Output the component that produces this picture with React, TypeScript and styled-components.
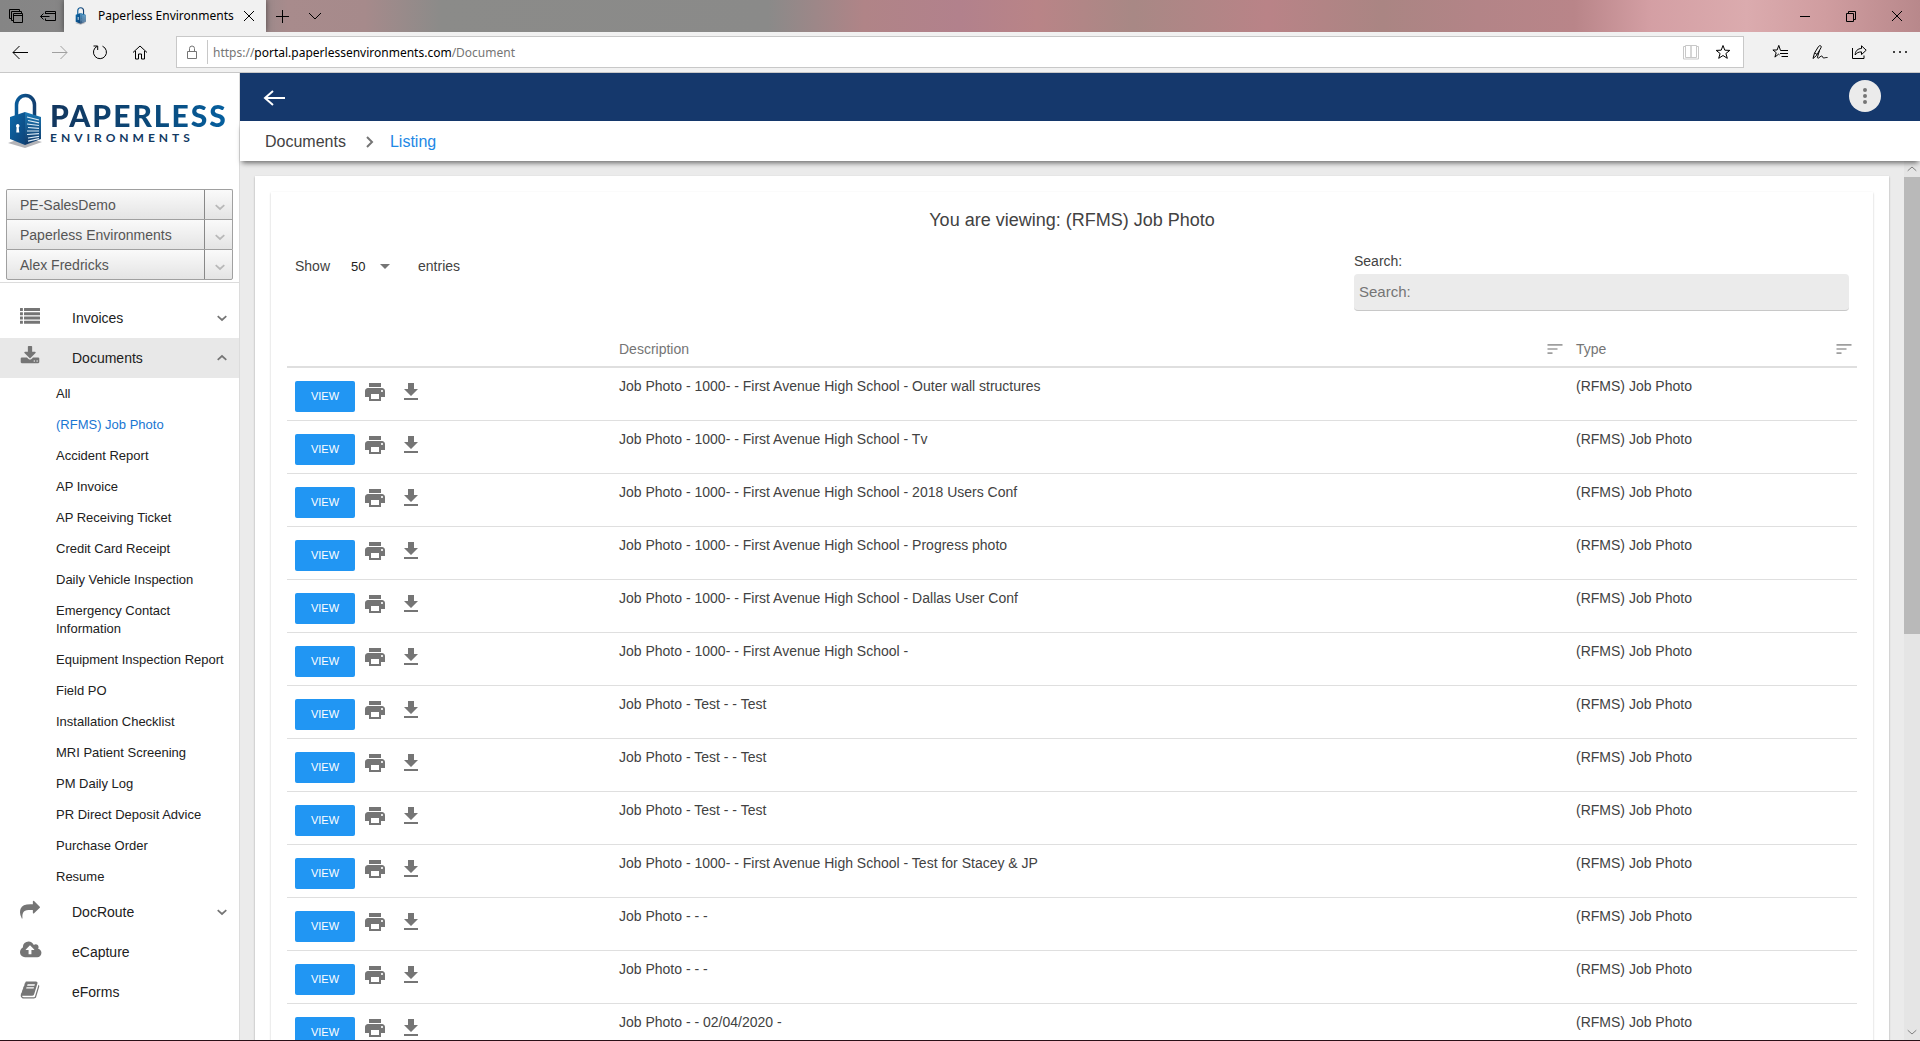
import React from 'react';
import styled, { createGlobalStyle, css } from 'styled-components';

const GlobalStyle = createGlobalStyle`
  *, *::before, *::after { box-sizing: border-box; }
  html, body { margin: 0; height: 100%; overflow: hidden; }
  #root { height: 100%; }
  body {
    font-family: "Liberation Sans", Arial, sans-serif;
    font-size: 14px;
    line-height: 20px;
    color: #424242;
    background: #fff;
  }
  button, input, select { font-family: inherit; }
  button { border: 0; padding: 0; background: none; color: inherit; cursor: pointer; }
  a { color: inherit; text-decoration: none; }
  svg { display: block; flex: none; }
`;

/* ---------- Browser window ---------- */

const Window = styled.div`
  height: 100vh;
  display: flex;
  flex-direction: column;
  overflow: hidden;
  border-bottom: 1px solid #2a1018;
`;

const TitleBar = styled.header`
  flex: none;
  height: 32px;
  display: flex;
  font-family: "Noto Sans", "Open Sans", sans-serif;
  font-size: 12px;
  color: #000;
  background: linear-gradient(
    90deg,
    #858585 0%, #8b8889 12%, #a88b8c 15%, #a68a8b 19%, #8b8b89 23%, #8a8a89 40%,
    #b08487 45%, #b2818c 50%, #b98487 54%, #a88885 59%, #b98387 66%, #aa8583 72%,
    #b38487 77%, #b98589 82%, #d49fa4 86%, #dbabae 91%, #d09da0 95%, #b8888b 100%
  );
`;

const TabTools = styled.div`
  width: 64px;
  display: flex;
  align-items: center;
  gap: 16px;
  padding-left: 8px;
`;

const Tab = styled.div`
  width: 202px;
  display: flex;
  align-items: center;
  padding: 0 11px 0 10px;
  background: #f1f1f1;
  box-shadow: 0 0 6px rgba(0, 0, 0, 0.5);
`;

const TabTitle = styled.span`
  flex: 1;
  margin-left: 11px;
  white-space: nowrap;
  line-height: 20px;
`;

const NewTab = styled.div`
  flex: 1;
  display: flex;
  align-items: center;
  gap: 18px;
  padding-left: 9px;
`;

const WindowButtons = styled.div`
  display: flex;
  align-items: center;
  gap: 32px;
  padding-right: 16px;
`;

const Toolbar = styled.div`
  flex: none;
  height: 41px;
  display: flex;
  align-items: center;
  background: #f1f1f1;
  border-bottom: 1px solid #c8c8c8;
`;

const NavButtons = styled.nav`
  width: 176px;
  display: flex;
  gap: 24px;
  padding-left: 12px;
`;

const AddressBar = styled.div`
  flex: 1;
  height: 32px;
  display: flex;
  align-items: center;
  padding-right: 12px;
  background: #fff;
  border: 1px solid #c8c8c8;
  font-family: "Noto Sans", "Open Sans", sans-serif;
  font-size: 12px;
`;

const LockBox = styled.span`
  width: 31px;
  height: 24px;
  display: flex;
  align-items: center;
  justify-content: center;
  border-right: 1px solid #c8c8c8;
`;

const Url = styled.span`
  flex: 1;
  padding: 1px 0 0 5px;
  color: #757575;
  white-space: nowrap;
  b { font-weight: 400; color: #000; }
`;

const AddressTools = styled.div`
  display: flex;
  gap: 16px;
`;

const BrowserTools = styled.div`
  width: 176px;
  display: flex;
  justify-content: flex-end;
  gap: 24px;
  padding-right: 12px;
`;

const IconButton = styled.button`
  display: flex;
`;

/* ---------- Page ---------- */

const Page = styled.div`
  flex: 1;
  min-height: 0;
  display: flex;
`;

const Sidebar = styled.aside`
  flex: none;
  width: 240px;
  background: #fff;
  border-right: 1px solid #dcdcdc;
`;

const Brand = styled.a`
  height: 116px;
  display: flex;
  align-items: flex-start;
  gap: 7px;
  padding: 20px 0 0 7px;
`;

const BrandText = styled.span`
  padding-top: 7px;
  font-family: Lato, sans-serif;
  color: #123a63;
`;

const BrandName = styled.span`
  display: block;
  font-size: 30px;
  line-height: 30px;
  font-weight: 900;
  letter-spacing: 2px;
  background: linear-gradient(90deg, #12365e, #0a4a7c 60%, #0560a0);
  background-clip: text;
  -webkit-text-fill-color: transparent;
`;

const BrandSub = styled.span`
  display: block;
  padding-top: 2px;
  font-size: 12px;
  line-height: 12px;
  font-weight: 700;
  letter-spacing: 4px;
`;

const Pickers = styled.div`
  height: 94px;
  padding: 0 6px;
  border-bottom: 1px solid #dcdcdc;
`;

const Picker = styled.button`
  width: 100%;
  height: 30px;
  display: flex;
  text-align: left;
  font-size: 14px;
  line-height: 20px;
  color: #555;
  background: linear-gradient(#fafafa, #e4e4e4);
  border: 1px solid #a0a0a0;
  border-bottom-width: 0;
  &:first-child { border-radius: 2px 2px 0 0; }
  &:last-child { height: 31px; border-bottom-width: 1px; border-radius: 0 0 2px 2px; }
`;

const PickerLabel = styled.span`
  flex: 1;
  padding: 5px 13px;
`;

const PickerArrow = styled.span`
  width: 28px;
  align-self: stretch;
  display: flex;
  align-items: center;
  justify-content: center;
  padding: 4px 0 0 2px;
  border-left: 1px solid #888;
`;

const Menu = styled.nav`
  padding-top: 15px;
`;

const MenuItem = styled.a<{ $open?: boolean }>`
  height: 40px;
  display: flex;
  align-items: center;
  padding: 0 12px 0 20px;
  color: #212121;
  background: ${p => (p.$open ? '#e8e8e8' : 'transparent')};
`;

const MenuIcon = styled.span`
  width: 52px;
  height: 24px;
  color: #757575;
`;

const MenuLabel = styled.span`
  flex: 1;
`;

const SubMenu = styled.ul`
  margin: 0;
  padding: 0;
  list-style: none;
`;

const SubItem = styled.a<{ $active?: boolean }>`
  display: block;
  padding: 7px 12px 6px 56px;
  font-size: 13px;
  line-height: 18px;
  color: ${p => (p.$active ? '#1976d2' : '#212121')};
`;

const Main = styled.main`
  flex: 1;
  min-width: 0;
  display: flex;
  flex-direction: column;
`;

const AppBar = styled.div`
  flex: none;
  height: 48px;
  display: flex;
  align-items: center;
  justify-content: space-between;
  padding: 0 39px 0 22px;
  background: #15386c;
`;

const BackButton = styled(IconButton)`
  padding-top: 2px;
`;

const MoreButton = styled.button`
  width: 32px;
  height: 32px;
  display: flex;
  align-items: center;
  justify-content: center;
  margin-bottom: 2px;
  border-radius: 50%;
  background: #ebebeb;
  color: #757575;
`;

const Breadcrumb = styled.nav`
  flex: none;
  height: 40px;
  display: flex;
  align-items: center;
  padding: 2px 0 0 25px;
  font-size: 16px;
  background: #fff;
  box-shadow: 0 4px 5px -2px rgba(0, 0, 0, 0.55);
  z-index: 1;
  svg { margin: 0 15px 0 19px; }
`;

const CurrentCrumb = styled.a`
  color: #1e88e5;
`;

const Body = styled.div`
  flex: 1;
  min-height: 0;
  display: flex;
  background: #ebebeb;
`;

const Scroll = styled.div`
  flex: 1;
  min-width: 0;
  overflow: hidden;
  padding: 15px 15px 0 15px;
`;

const Card = styled.section`
  padding: 16px;
  background: #fff;
  box-shadow: 0 1px 2px rgba(0, 0, 0, 0.3);
`;

const Panel = styled.div`
  padding: 16px;
  background: #fff;
  box-shadow: 0 1px 2px rgba(0, 0, 0, 0.22);
`;

const Title = styled.h1`
  margin: 0;
  font-size: 18px;
  line-height: 24px;
  font-weight: 400;
  text-align: center;
`;

const Controls = styled.div`
  display: flex;
  justify-content: space-between;
  height: 99px;
  padding: 19px 8px 0;
`;

const Length = styled.label`
  display: flex;
  align-items: center;
  height: 30px;
`;

const SelectBox = styled.span`
  display: flex;
  align-items: center;
  margin: 0 28px 0 21px;
`;

const LengthSelect = styled.select`
  appearance: none;
  width: 29px;
  padding: 2px 0 0;
  border: 0;
  outline: 0;
  background: transparent;
  font-size: 13px;
  line-height: 20px;
  color: #212121;
`;

const Search = styled.label`
  width: 495px;
`;

const SearchText = styled.span`
  display: block;
  height: 23px;
`;

const SearchInput = styled.input`
  display: block;
  width: 100%;
  height: 37px;
  padding: 0 5px 2px;
  border: 0;
  border-bottom: 1px solid #c8c8c8;
  border-radius: 4px;
  outline: 0;
  font-size: 15px;
  background: #ebebeb;
  &::placeholder { color: #757575; opacity: 1; }
`;

const Table = styled.table`
  width: 100%;
  table-layout: fixed;
  border-collapse: separate;
  border-spacing: 0;
`;

const Th = styled.th<{ $width?: number }>`
  ${p => p.$width && css`width: ${p.$width}px;`}
  height: 37px;
  padding: 0 3px 0 8px;
  border-bottom: 2px solid #dfdfdf;
  font-weight: 400;
  text-align: left;
  color: #757575;
`;

const HeadCell = styled.div`
  display: flex;
  justify-content: space-between;
  align-items: center;
  height: 35px;
  svg { color: #9e9e9e; }
`;

const Td = styled.td`
  height: 53px;
  padding: 8px;
  vertical-align: top;
  border-bottom: 1px solid #dfdfdf;
`;

const ActionTd = styled(Td)`
  padding-top: 12px;
`;

const Actions = styled.div`
  display: flex;
  align-items: flex-start;
  gap: 12px;
  color: #757575;
`;

const ActionPair = styled.div`
  display: flex;
  align-items: flex-start;
  gap: 8px;
`;

const ViewButton = styled.button`
  width: 60px;
  height: 31px;
  margin-top: 1px;
  border-radius: 2px;
  background: #2196f3;
  color: #fff;
  font-size: 11px;
  line-height: 31px;
  font-weight: 500;
`;

const ScrollTrack = styled.div`
  flex: none;
  width: 16px;
  display: flex;
  flex-direction: column;
  background: #e5e5e5;
`;

const ScrollArrow = styled.button`
  flex: none;
  height: 16px;
  display: flex;
  align-items: center;
  justify-content: center;
`;

const ScrollRail = styled.div`
  flex: 1;
`;

const ScrollThumb = styled.div`
  height: 54%;
  background: #b9b9b9;
`;

/* ---------- Icons ---------- */

type IconProps = { size?: number; box?: string; children: React.ReactNode };

const Fill = ({ size = 24, box = '0 0 24 24', children }: IconProps) => (
  <svg width={size} height={size} viewBox={box} fill="currentColor" aria-hidden="true">{children}</svg>
);

const Line = ({ size = 16, color = '#000', width = 1, children }: { size?: number; color?: string; width?: number; children: React.ReactNode }) => (
  <svg width={size} height={size} viewBox={`0 0 ${size} ${size}`} fill="none" stroke={color} strokeWidth={width} aria-hidden="true">{children}</svg>
);

const Chevron = ({ up, color = '#757575', stroke = 1.7 }: { up?: boolean; color?: string; stroke?: number }) => (
  <svg width={10} height={8} viewBox="0 0 10 8" fill="none" stroke={color} strokeWidth={stroke} aria-hidden="true">
    <path d={up ? 'M0.700 5.800L5 2l4.300 3.800' : 'M0.700 2.200L5 6l4.300-3.800'} />
  </svg>
);

const Padlock = ({ width, height }: { width: number; height: number }) => (
  <svg width={width} height={height} viewBox="0 0 36 56" aria-hidden="true">
    <defs>
      <linearGradient id="shackle" x1="0" x2="1">
        <stop offset="0" stopColor="#0a5a98" />
        <stop offset="1" stopColor="#123f70" />
      </linearGradient>
      <linearGradient id="front" x1="0" y1="0" x2="1" y2="1">
        <stop offset="0" stopColor="#0c6aab" />
        <stop offset="1" stopColor="#0e4378" />
      </linearGradient>
      <linearGradient id="side" x1="0" y1="0" x2="0" y2="1">
        <stop offset="0" stopColor="#1a78b4" />
        <stop offset="1" stopColor="#123a68" />
      </linearGradient>
    </defs>
    <path d="M1 50l17-6 17 5-17 6z" fill="#b4b4b8" />
    <path d="M9.500 25V12a9 9.500 0 0 1 18 0v13" fill="none" stroke="url(#shackle)" strokeWidth="3.500" />
    <path d="M3 24l15-5v33L3 46z" fill="url(#front)" />
    <path d="M18 19l16 5v22l-16 6z" fill="url(#side)" />
    <path d="M20 24l12 3M21 27.500l11 2.300M20 31l12 1.500M21 34.500l11 .8M20 38h12M20 41.500l12-.8M21 45l11-1.700M21 48.200l11-2.500" stroke="#dcebf5" strokeWidth="1.200" />
    <path d="M10.500 31a2 2 0 0 1 1.200 3.600l.6 5h-3l.3-5.200A2 2 0 0 1 10.500 31z" fill="#fff" />
  </svg>
);

const PrintIcon = () => (
  <Fill><path d="M19 8H5c-1.66 0-3 1.34-3 3v6h4v4h12v-4h4v-6c0-1.66-1.34-3-3-3zm-3 11H8v-5h8v5zm3-7c-.55 0-1-.45-1-1s.45-1 1-1 1 .45 1 1-.45 1-1 1zm-1-9H6v4h12V3z" /></Fill>
);
const DownloadIcon = () => (
  <Fill><path d="M19 9h-4V3H9v6H5l7 7 7-7zM5 18v2h14v-2H5z" /></Fill>
);
const SortIcon = () => (
  <Fill size={20}><path d="M3 18h6v-2H3v2zM3 6v2h18V6H3zm0 7h12v-2H3v2z" /></Fill>
);

const FA = '0 0 1792 1792';
const ListIcon = () => (
  <Fill size={20} box={FA}>
    {[180, 560, 940, 1320].map(y => (
      <React.Fragment key={y}>
        <rect x="0" y={y} width="260" height="270" rx="32" />
        <rect x="360" y={y} width="1432" height="270" rx="32" />
      </React.Fragment>
    ))}
  </Fill>
);
const TrayIcon = () => (
  <Fill size={20} box={FA}><path d="M1344 1344q0-26-19-45t-45-19-45 19-19 45 19 45 45 19 45-19 19-45zm256 0q0-26-19-45t-45-19-45 19-19 45 19 45 45 19 45-19 19-45zm128-224v320q0 40-28 68t-68 28h-1472q-40 0-68-28t-28-68v-320q0-40 28-68t68-28h465l135 136q58 56 136 56t136-56l136-136h464q40 0 68 28t28 68zm-325-569q17 41-14 70l-448 448q-18 19-45 19t-45-19l-448-448q-31-29-14-70 17-39 59-39h256v-448q0-26 19-45t45-19h256q26 0 45 19t19 45v448h256q42 0 59 39z" /></Fill>
);
const ShareArrowIcon = () => (
  <Fill size={20} box={FA}><path d="M1792 640q0 26-19 45l-512 512q-19 19-45 19t-45-19-19-45v-256h-224q-98 0-175.5 6t-154 21.5-133 42.5-105.5 69.5-80 101-48.5 138.5-17.5 181q0 55 5 123 0 6 2.5 23.5t2.5 26.5q0 15-8.5 25t-23.5 10q-16 0-28-17-7-9-13-22t-13.5-30-10.5-24q-127-285-127-451 0-199 53-333 162-403 875-403h224v-256q0-26 19-45t45-19 45 19l512 512q19 19 19 45z" /></Fill>
);
const CloudIcon = () => (
  <svg width="22" height="20" viewBox="0 0 1971 1792" fill="currentColor" aria-hidden="true"><path d="M1280 864q0-14-9-23l-352-352q-9-9-23-9t-23 9l-351 351q-10 12-10 24 0 14 9 23t23 9h224v352q0 13 9.5 22.5t22.5 9.5h192q13 0 22.5-9.5t9.5-22.5v-352h224q13 0 22.5-9.5t9.5-22.5zm640 288q0 159-112.5 271.5t-271.5 112.5h-1088q-185 0-316.5-131.5t-131.5-316.5q0-130 70-240t188-165q-2-30-2-43 0-212 150-362t362-150q156 0 285.5 87t188.5 231q71-62 166-62 106 0 181 75t75 181q0 76-41 138 130 31 213.5 135.5t83.5 238.5z" /></svg>
);
const BookIcon = () => (
  <Fill size={20} box={FA}><path d="M1703 478q40 57 18 129l-275 906q-19 64-76.5 107.5t-122.5 43.5h-923q-77 0-148.5-53.5t-99.5-131.5q-24-67-2-127 0-4 3-27t4-37q1-8-3-21.5t-3-19.5q2-11 8-21t16.5-23.5 16.5-23.5q23-38 45-91.5t30-91.5q3-10 .5-30t-.5-28q3-11 17-28t17-23q21-36 42-92t25-90q1-9-2.5-32t.5-28q4-13 22-30.5t22-22.5q19-26 42.5-84.5t27.5-96.5q1-8-3-25.5t-2-26.5q2-8 9-18t18-23 17-21q8-12 16.5-30.5t15-35 16-36 19.5-32 26.5-23.5 36-11.5 47.5 5.5l-1 3q38-9 51-9h761q74 0 114 56t18 130l-274 906q-36 119-71.5 153.5t-128.5 34.5h-869q-27 0-38 15-11 16-1 43 24 70 144 70h923q29 0 56-15.500t35-41.500l300-987q7-22 5-57 38 15 59 43zm-1064 2q-4 13 2 22.500t20 9.500h608q13 0 25.500-9.500t16.500-22.500l21-64q4-13-2-22.500t-20-9.500h-608q-13 0-25.500 9.500t-16.500 22.500zm-83 256q-4 13 2 22.500t20 9.500h608q13 0 25.500-9.500t16.500-22.500l21-64q4-13-2-22.500t-20-9.500h-608q-13 0-25.500 9.500t-16.500 22.500z" /></Fill>
);

const STAR = 'M8 1.500l1.800 4.700 5 .2-3.900 3.100 1.400 4.800L8 11.500l-4.300 2.800 1.400-4.800L1.200 6.400l5-.2z';

/* ---------- Data ---------- */

const documentTypes = [
  'All', '(RFMS) Job Photo', 'Accident Report', 'AP Invoice', 'AP Receiving Ticket',
  'Credit Card Receipt', 'Daily Vehicle Inspection', 'Emergency Contact Information',
  'Equipment Inspection Report', 'Field PO', 'Installation Checklist', 'MRI Patient Screening',
  'PM Daily Log', 'PR Direct Deposit Advice', 'Purchase Order', 'Resume',
];

const rows = [
  'Job Photo - 1000- - First Avenue High School - Outer wall structures',
  'Job Photo - 1000- - First Avenue High School - Tv',
  'Job Photo - 1000- - First Avenue High School - 2018 Users Conf',
  'Job Photo - 1000- - First Avenue High School - Progress photo',
  'Job Photo - 1000- - First Avenue High School - Dallas User Conf',
  'Job Photo - 1000- - First Avenue High School -',
  'Job Photo - Test - - Test',
  'Job Photo - Test - - Test',
  'Job Photo - Test - - Test',
  'Job Photo - 1000- - First Avenue High School - Test for Stacey & JP',
  'Job Photo - - -',
  'Job Photo - - -',
  'Job Photo - - 02/04/2020 -',
];

const accounts = ['PE-SalesDemo', 'Paperless Environments', 'Alex Fredricks'];

/* ---------- Components ---------- */

function BrowserChrome() {
  return (
    <>
      <TitleBar>
        <TabTools>
          <IconButton aria-label="Tabs set aside">
            <Line><path d="M3.500 10.500h-2v-9h10v2M5.500 12.500h-2v-9h10v2M5.500 5.500h9v9h-9zM5.500 7.500h9" /></Line>
          </IconButton>
          <IconButton aria-label="Set tabs aside">
            <Line><path d="M5.500 6V3.500h10v9h-10V10.500M5.500 5.500h10M0.500 8.500h9M3.500 5.500l-3 3 3 3" /></Line>
          </IconButton>
        </TabTools>
        <Tab>
          <Padlock width={13} height={18} />
          <TabTitle>Paperless Environments</TabTitle>
          <IconButton aria-label="Close tab">
            <Line size={12}><path d="M1 1l10 10M11 1L1 11" /></Line>
          </IconButton>
        </Tab>
        <NewTab>
          <IconButton aria-label="New tab"><Line size={15}><path d="M7.500 1v13M1 7.500h13" /></Line></IconButton>
          <IconButton aria-label="Tab previews"><Line size={14}><path d="M1 4l6 6 6-6" /></Line></IconButton>
        </NewTab>
        <WindowButtons>
          <IconButton aria-label="Minimize"><Line size={14}><path d="M2 7.500h10" /></Line></IconButton>
          <IconButton aria-label="Restore"><Line size={14}><path d="M2.500 4.500h7v8h-7zM4.500 4.500v-2h7v8h-2" /></Line></IconButton>
          <IconButton aria-label="Close"><Line size={14}><path d="M2 2l10 10M12 2L2 12" /></Line></IconButton>
        </WindowButtons>
      </TitleBar>
      <Toolbar>
        <NavButtons>
          <IconButton aria-label="Back"><Line><path d="M1 8.500h15M7.500 2L1 8.500 7.500 15" /></Line></IconButton>
          <IconButton aria-label="Forward"><Line color="#a0a0a0"><path d="M0 8.500h15M8.500 2L15 8.500 8.500 15" /></Line></IconButton>
          <IconButton aria-label="Refresh"><Line><path d="M10.500 2.200a6.500 6.500 0 1 1-5.500.2M1.500 2h4.200v4" /></Line></IconButton>
          <IconButton aria-label="Home"><Line><path d="M1 8.500L8 2l7 6.500M3.500 7v8h3v-5h3v5h3V7" /></Line></IconButton>
        </NavButtons>
        <AddressBar>
          <LockBox><Line color="#757575"><path d="M3.500 7.500h9v7h-9zM5.500 7.500v-3a2.500 2.500 0 0 1 5 0v3" /></Line></LockBox>
          <Url>https://<b>portal.paperlessenvironments.com</b>/Document</Url>
          <AddressTools>
            <IconButton aria-label="Reading view"><Line color="#c8c8c8"><path d="M2.500 1.500h5.500v12h-5.500zM8 1.500h5.500v12h-5.500zM2.500 2.500h-2v12.500h15v-12.500h-2" /></Line></IconButton>
            <IconButton aria-label="Add to favorites"><Line><path d={STAR} /></Line></IconButton>
          </AddressTools>
        </AddressBar>
        <BrowserTools>
          <IconButton aria-label="Favorites"><Line><path d="M7.500 10.800L6.500 10.200l-3.600 2.900 1.300-4.400L0.900 6h4.200l1.700-4.600L8.500 6.500H16M8 9.500h8M9.500 12.500H16" /></Line></IconButton>
          <IconButton aria-label="Notes"><Line><path d="M1 14.500L2.500 9l4-6.500c1.200-1.500 3.500-.8 2.500 1.200L4.500 11.500l-3.500 3zM3 9l2 1.500M7.500 6.500L5.500 13c-.3 1.200.5 1.500 1.500.7 1.500-1.200 2.500-2.200 3.300-1.400.7.700.5 2 1.700 1.700.8-.2 1.500-.5 3.500-.5" /></Line></IconButton>
          <IconButton aria-label="Share"><Line><path d="M0.500 4v10.500h11.500V11.500M3.200 11c0-4 2.600-6.500 6.300-6.500V1.800l4.700 4.400-4.700 4.400V7.900c-3 0-4.800.8-6.300 3.100z" /></Line></IconButton>
          <IconButton aria-label="More"><Fill size={16} box="0 0 16 16"><path d="M1 7h2v2H1zM7 7h2v2H7zM13 7h2v2h-2z" /></Fill></IconButton>
        </BrowserTools>
      </Toolbar>
    </>
  );
}

function SideNav() {
  return (
    <Sidebar>
      <Brand href="#">
        <Padlock width={36} height={56} />
        <BrandText>
          <BrandName>PAPERLESS</BrandName>
          <BrandSub>ENVIRONMENTS</BrandSub>
        </BrandText>
      </Brand>
      <Pickers>
        {accounts.map(a => (
          <Picker key={a}>
            <PickerLabel>{a}</PickerLabel>
            <PickerArrow><Chevron color="#b8b8b8" /></PickerArrow>
          </Picker>
        ))}
      </Pickers>
      <Menu>
        <MenuItem href="#">
          <MenuIcon><ListIcon /></MenuIcon>
          <MenuLabel>Invoices</MenuLabel>
          <Chevron />
        </MenuItem>
        <MenuItem href="#" $open>
          <MenuIcon><TrayIcon /></MenuIcon>
          <MenuLabel>Documents</MenuLabel>
          <Chevron up />
        </MenuItem>
        <SubMenu>
          {documentTypes.map(t => (
            <li key={t}><SubItem href="#" $active={t === '(RFMS) Job Photo'}>{t}</SubItem></li>
          ))}
        </SubMenu>
        <MenuItem href="#">
          <MenuIcon><ShareArrowIcon /></MenuIcon>
          <MenuLabel>DocRoute</MenuLabel>
          <Chevron />
        </MenuItem>
        <MenuItem href="#">
          <MenuIcon><CloudIcon /></MenuIcon>
          <MenuLabel>eCapture</MenuLabel>
        </MenuItem>
        <MenuItem href="#">
          <MenuIcon><BookIcon /></MenuIcon>
          <MenuLabel>eForms</MenuLabel>
        </MenuItem>
      </Menu>
    </Sidebar>
  );
}

function DocumentTable() {
  return (
    <Table>
      <thead>
        <tr>
          <Th $width={324} aria-label="Actions" />
          <Th><HeadCell>Description<SortIcon /></HeadCell></Th>
          <Th $width={289}><HeadCell>Type<SortIcon /></HeadCell></Th>
        </tr>
      </thead>
      <tbody>
        {rows.map((r, i) => (
          <tr key={i}>
            <ActionTd>
              <Actions>
                <ActionPair>
                  <ViewButton>VIEW</ViewButton>
                  <IconButton aria-label="Print"><PrintIcon /></IconButton>
                </ActionPair>
                <IconButton aria-label="Download"><DownloadIcon /></IconButton>
              </Actions>
            </ActionTd>
            <Td>{r}</Td>
            <Td>(RFMS) Job Photo</Td>
          </tr>
        ))}
      </tbody>
    </Table>
  );
}

export default function App() {
  return (
    <>
      <GlobalStyle />
      <Window>
        <BrowserChrome />
        <Page>
          <SideNav />
          <Main>
            <AppBar>
              <BackButton aria-label="Go back">
                <Line size={24} color="#fff" width={2}><path d="M3 12h20M11 5l-8 7 8 7" /></Line>
              </BackButton>
              <MoreButton aria-label="More options">
                <Fill><path d="M12 8a2 2 0 1 0 0-4 2 2 0 0 0 0 4zm0 2a2 2 0 1 0 0 4 2 2 0 0 0 0-4zm0 6a2 2 0 1 0 0 4 2 2 0 0 0 0-4z" /></Fill>
              </MoreButton>
            </AppBar>
            <Breadcrumb aria-label="Breadcrumb">
              <a href="#">Documents</a>
              <svg width="10" height="14" viewBox="0 0 10 14" fill="none" stroke="#757575" strokeWidth="2" aria-hidden="true"><path d="M2 2l5 5-5 5" /></svg>
              <CurrentCrumb href="#">Listing</CurrentCrumb>
            </Breadcrumb>
            <Body>
              <Scroll>
                <Card>
                  <Panel>
                    <Title>You are viewing: (RFMS) Job Photo</Title>
                    <Controls>
                      <Length>
                        Show
                        <SelectBox>
                          <LengthSelect defaultValue="50">
                            <option>50</option>
                            <option>100</option>
                          </LengthSelect>
                          <svg width="10" height="5" viewBox="0 0 10 5" fill="#757575" aria-hidden="true"><path d="M0 0h10L5 5z" /></svg>
                        </SelectBox>
                        entries
                      </Length>
                      <Search>
                        <SearchText>Search:</SearchText>
                        <SearchInput type="search" placeholder="Search:" />
                      </Search>
                    </Controls>
                    <DocumentTable />
                  </Panel>
                </Card>
              </Scroll>
              <ScrollTrack>
                <ScrollArrow aria-label="Scroll up"><Chevron up color="#808080" stroke={1} /></ScrollArrow>
                <ScrollRail><ScrollThumb /></ScrollRail>
                <ScrollArrow aria-label="Scroll down"><Chevron color="#808080" stroke={1} /></ScrollArrow>
              </ScrollTrack>
            </Body>
          </Main>
        </Page>
      </Window>
    </>
  );
}
